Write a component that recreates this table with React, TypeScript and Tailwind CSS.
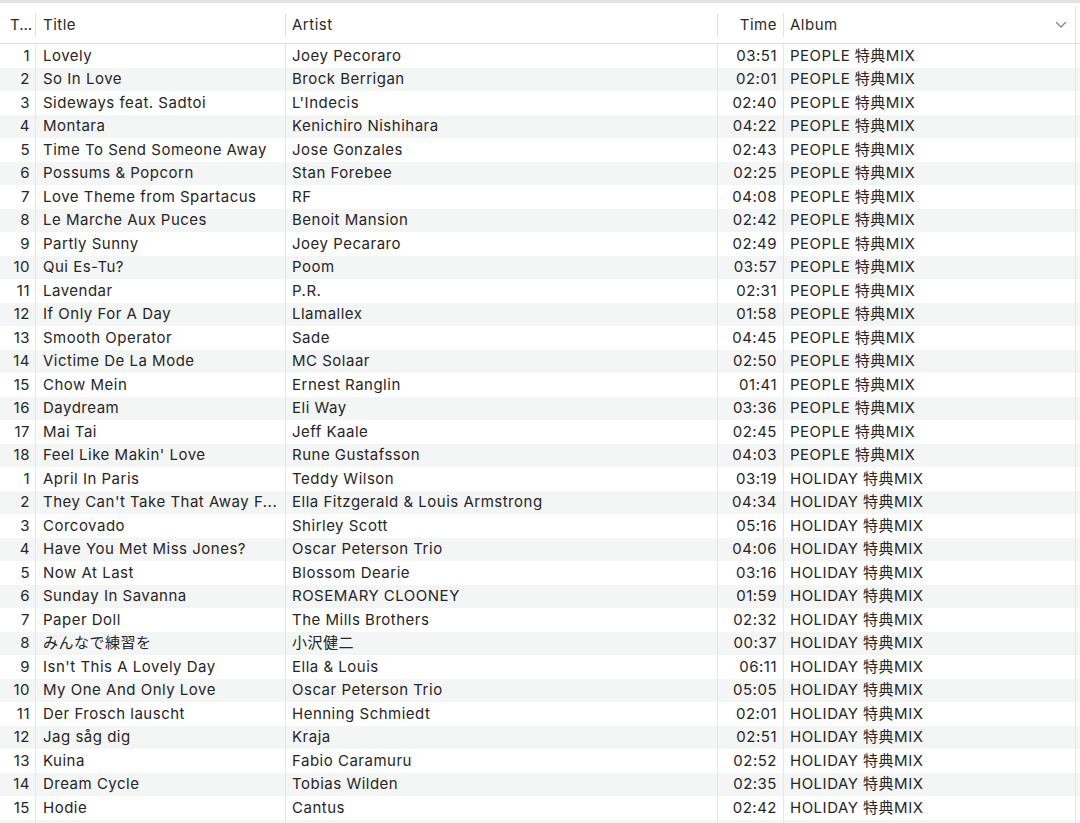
import React from "react";

const people: [string, string, string][] = [
  ["Lovely", "Joey Pecoraro", "03:51"],
  ["So In Love", "Brock Berrigan", "02:01"],
  ["Sideways feat. Sadtoi", "L'Indecis", "02:40"],
  ["Montara", "Kenichiro Nishihara", "04:22"],
  ["Time To Send Someone Away", "Jose Gonzales", "02:43"],
  ["Possums & Popcorn", "Stan Forebee", "02:25"],
  ["Love Theme from Spartacus", "RF", "04:08"],
  ["Le Marche Aux Puces", "Benoit Mansion", "02:42"],
  ["Partly Sunny", "Joey Pecararo", "02:49"],
  ["Qui Es-Tu?", "Poom", "03:57"],
  ["Lavendar", "P.R.", "02:31"],
  ["If Only For A Day", "Llamallex", "01:58"],
  ["Smooth Operator", "Sade", "04:45"],
  ["Victime De La Mode", "MC Solaar", "02:50"],
  ["Chow Mein", "Ernest Ranglin", "01:41"],
  ["Daydream", "Eli Way", "03:36"],
  ["Mai Tai", "Jeff Kaale", "02:45"],
  ["Feel Like Makin' Love", "Rune Gustafsson", "04:03"],
];

const holiday: [string, string, string][] = [
  ["April In Paris", "Teddy Wilson", "03:19"],
  ["They Can't Take That Away F...", "Ella Fitzgerald & Louis Armstrong", "04:34"],
  ["Corcovado", "Shirley Scott", "05:16"],
  ["Have You Met Miss Jones?", "Oscar Peterson Trio", "04:06"],
  ["Now At Last", "Blossom Dearie", "03:16"],
  ["Sunday In Savanna", "ROSEMARY CLOONEY", "01:59"],
  ["Paper Doll", "The Mills Brothers", "02:32"],
  ["みんなで練習を", "小沢健二", "00:37"],
  ["Isn't This A Lovely Day", "Ella & Louis", "06:11"],
  ["My One And Only Love", "Oscar Peterson Trio", "05:05"],
  ["Der Frosch lauscht", "Henning Schmiedt", "02:01"],
  ["Jag såg dig", "Kraja", "02:51"],
  ["Kuina", "Fabio Caramuru", "02:52"],
  ["Dream Cycle", "Tobias Wilden", "02:35"],
  ["Hodie", "Cantus", "02:42"],
];

type Row = { n: number; title: string; artist: string; time: string; album: string };

const rows: Row[] = [
  ...people.map(([t, a, tm], i) => ({ n: i + 1, title: t, artist: a, time: tm, album: "PEOPLE 特典MIX" })),
  ...holiday.map(([t, a, tm], i) => ({ n: i + 1, title: t, artist: a, time: tm, album: "HOLIDAY 特典MIX" })),
];

const font = {
  fontFamily: '"Inter", "Noto Sans CJK JP", sans-serif',
};

export default function App() {
  return (
    <div className="w-[1080px] h-[823px] overflow-hidden bg-white text-[15px] tracking-[0.5px] text-[#262626]" style={font}>
      <div className="h-[3px] bg-[#e3e3e3]" />
      <div className="flex h-[41px] pt-[3px] items-center border-b border-[#dedede] text-[#2a2a2a] leading-[20px]">
        <div className="w-[36px] shrink-0 pl-[10px] border-r border-[#e2e2e2] h-[24px] flex items-center tracking-normal">T...</div>
        <div className="w-[250px] shrink-0 pl-[7px] border-r border-[#e2e2e2] h-[24px] flex items-center">Title</div>
        <div className="w-[432px] shrink-0 pl-[6px] border-r border-[#e2e2e2] h-[24px] flex items-center">Artist</div>
        <div className="w-[66px] shrink-0 pr-[6px] border-r border-[#e2e2e2] h-[24px] flex items-center justify-end">Time</div>
        <div className="w-[291px] shrink-0 pl-[6px] pr-[8px] h-[24px] flex items-center justify-between">
          <span>Album</span>
          <svg width="12" height="8" viewBox="0 0 12 8">
            <path d="M1.5 1.5 L6 6 L10.5 1.5" fill="none" stroke="#8a8a8a" strokeWidth="1.4" strokeLinecap="round" strokeLinejoin="round" />
          </svg>
        </div>
        <div className="w-[1px] self-stretch bg-[#e2e2e2]" />
      </div>
      <div>
        {[...rows, null].map((r, i) => (
          <div
            key={i}
            className={`flex h-[23.5px] items-center leading-[20px] ${i % 2 === 1 ? "bg-[#f4f5f5]" : "bg-white"}`}
          >
            <div className="w-[36px] shrink-0 h-full flex items-center justify-end pr-[5px] border-r border-[#e6e6e6]">
              {r?.n}
            </div>
            <div className="w-[250px] shrink-0 h-full flex items-center pl-[7px] pr-[4px] border-r border-[#e6e6e6] whitespace-nowrap">
              {r?.title}
            </div>
            <div className="w-[432px] shrink-0 h-full flex items-center pl-[6px] border-r border-[#e6e6e6] whitespace-nowrap">
              {r?.artist}
            </div>
            <div className="w-[66px] shrink-0 h-full flex items-center justify-end pr-[6px] border-r border-[#e6e6e6]">
              {r?.time}
            </div>
            <div className="w-[291px] shrink-0 h-full flex items-center pl-[6px] whitespace-nowrap">
              {r?.album}
            </div>
            <div className="w-[1px] self-stretch bg-[#e6e6e6]" />
          </div>
        ))}
      </div>
    </div>
  );
}
